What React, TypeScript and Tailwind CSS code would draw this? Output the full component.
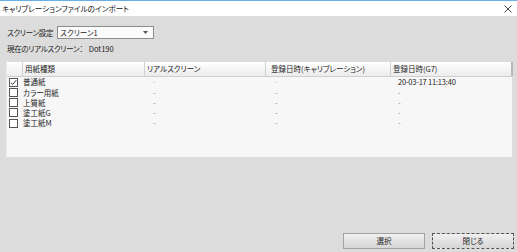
import React from "react";

const jp = "font-['Noto_Sans_CJK_JP','Noto_Sans',sans-serif] [font-feature-settings:'palt']";

const cols = "grid grid-cols-[16px_122px_121px_125px_122px]";

type Row = { name: string; checked: boolean; real: string; cal: string; g7: string };

const rows: Row[] = [
  { name: "普通紙", checked: true, real: "-", cal: "-", g7: "20-03-17 11:13:40" },
  { name: "カラー用紙", checked: false, real: "-", cal: "-", g7: "-" },
  { name: "上質紙", checked: false, real: "-", cal: "-", g7: "-" },
  { name: "塗工紙G", checked: false, real: "-", cal: "-", g7: "-" },
  { name: "塗工紙M", checked: false, real: "-", cal: "-", g7: "-" },
];

const Checkbox = ({ checked }: { checked: boolean }) => (
  <span className="flex h-[9px] w-[9px] items-center justify-center border border-[#555] bg-white">
    {checked && (
      <svg width="7" height="7" viewBox="0 0 7 7">
        <path d="M0.8 3.6 L2.7 5.4 L6.2 1.2" fill="none" stroke="#333" strokeWidth="1" />
      </svg>
    )}
  </span>
);

const Dash = ({ v, dim }: { v: string; dim?: boolean }) =>
  v === "-" ? (
    <span className={dim ? "text-[#bbb]" : "text-[#888]"}>-</span>
  ) : (
    <span className="text-[#222] tracking-[-0.2px]">{v}</span>
  );

export default function App() {
  return (
    <div className={`flex h-[252px] w-[517px] flex-col whitespace-nowrap bg-[#dcdcdc] text-[7.5px] leading-none text-[#222] ${jp}`}>
      {/* title bar */}
      <div className="flex h-[16px] items-center justify-between border-t border-[#6aaee6] bg-white pl-[2px] pr-[5px]">
        <span className="text-[7.6px] text-[#111]">キャリブレーションファイルのインポート</span>
        <svg width="8" height="8" viewBox="0 0 8 8">
          <path d="M0.5 0.5 L7.5 7.5 M7.5 0.5 L0.5 7.5" stroke="#444" strokeWidth="1" />
        </svg>
      </div>

      <div className="flex flex-1 flex-col">
        <div className="mt-[10px] flex h-[13px] items-center gap-[4px] pl-[7px]">
          <span className="tracking-[-0.3px]">スクリーン設定</span>
          <div className="flex h-[13px] w-[97px] items-center justify-between border border-[#8c8c8c] bg-[#fbfbfb] pl-[2px] pr-[5px]">
            <span>スクリーン1</span>
            <svg width="5" height="3" viewBox="0 0 5 3">
              <path d="M0 0 L5 0 L2.5 3 Z" fill="#555" />
            </svg>
          </div>
        </div>

        <div className="mt-[5px] flex h-[10px] items-center gap-[6px] pl-[7px]">
          <span className="tracking-[-0.3px]">現在のリアルスクリーン：</span>
          <span>Dot190</span>
        </div>

        {/* table */}
        <div className="ml-[6px] mt-[8px] h-[95px] w-[506px] border-l border-[#eaeaea] bg-[#f7f7f7]">
          <div className={`${cols} h-[15px] border-b border-[#cfcfcf] bg-gradient-to-b from-white to-[#ececec]`}>
            <div className="border-r border-[#d0d0d0]" />
            <div className="flex items-center border-r border-[#d0d0d0] pl-[2px]">用紙種類</div>
            <div className="flex items-center border-r border-[#d0d0d0] pl-[2px]">リアルスクリーン</div>
            <div className="flex items-center border-r border-[#d0d0d0] pl-[5px]">
              登録日時(キャリブレーション)
            </div>
            <div className="flex items-center border-r-2 border-[#b8b8b8] pl-[2px]">登録日時(G7)</div>
          </div>
          {rows.map((r, i) => (
            <div key={r.name} className={`${cols} h-[10.25px]`}>
              <div className="flex items-center pl-[2px]">
                <Checkbox checked={r.checked} />
              </div>
              <div className="flex items-center">{r.name}</div>
              <div className="flex items-center pl-[8px]">
                <Dash v={r.real} dim={i === 0} />
              </div>
              <div className="flex items-center pl-[9px]">
                <Dash v={r.cal} dim={i === 0} />
              </div>
              <div className="flex items-center pl-[7px]">
                <Dash v={r.g7} />
              </div>
            </div>
          ))}
        </div>

        <div className="flex-1" />

        <div className="mb-[3px] flex h-[16px] justify-end gap-[7px] pr-[3px]">
          <button className="flex w-[82px] items-center justify-center border border-[#a3a3a3] bg-gradient-to-b from-[#f0f0f0] to-[#d6d6d6]">
            選択
          </button>
          <button className="flex w-[82px] items-center justify-center border border-dashed border-[#555] bg-gradient-to-b from-[#f0f0f0] to-[#d6d6d6]">
            閉じる
          </button>
        </div>
      </div>
    </div>
  );
}
